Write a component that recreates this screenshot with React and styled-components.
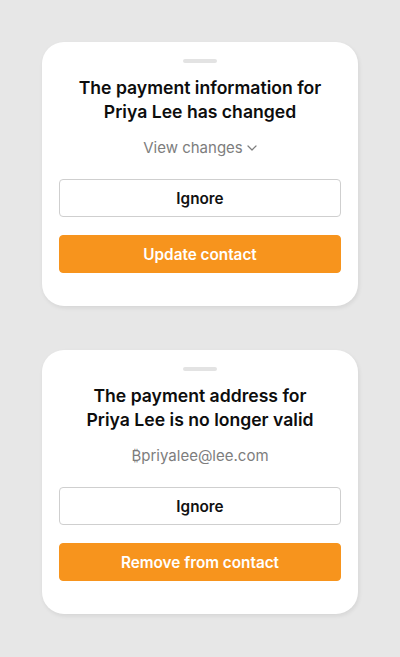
import React from 'react';
import styled, { createGlobalStyle } from 'styled-components';

const Global = createGlobalStyle`
  html, body {
    margin: 0;
    padding: 0;
    background: #e7e7e7;
    font-family: 'Inter', 'Noto Sans', sans-serif;
  }
  * { box-sizing: border-box; }
`;

const Page = styled.div`
  display: flex;
  flex-direction: column;
  gap: 44px;
  padding: 42px;
  min-height: 657px;
`;

const Card = styled.div`
  background: #fff;
  border-radius: 22px;
  padding: 17px 17px 33px;
  display: flex;
  flex-direction: column;
  align-items: center;
  box-shadow: 1px 2px 4px rgba(0, 0, 0, 0.08);
`;

const Handle = styled.div`
  width: 34px;
  height: 4px;
  border-radius: 2px;
  background: #e3e3e3;
`;

const Title = styled.h2`
  margin: 13px 0 0;
  font-size: 17.6px;
  line-height: 24px;
  font-weight: 600;
  color: #0d0d0d;
  text-align: center;
`;

const Sub = styled.div`
  margin-top: 14px;
  font-size: 15px;
  line-height: 20px;
  color: #7d7d7d;
  display: flex;
  align-items: center;
  gap: 4px;
`;

const Button = styled.button`
  width: 100%;
  height: 38px;
  border-radius: 4px;
  font-family: inherit;
  font-size: 15.3px;
  font-weight: 600;
  margin-top: ${(p) => (p.$primary ? '18px' : '21px')};
  border: 1px solid ${(p) => (p.$primary ? '#f7941d' : '#cfcfcf')};
  background: ${(p) => (p.$primary ? '#f7941d' : '#fff')};
  color: ${(p) => (p.$primary ? '#fff' : '#111')};
`;

const Chevron = () => (
  <svg width="10" height="6" viewBox="0 0 10 6" fill="none">
    <path d="M1 1l4 4 4-4" stroke="#7d7d7d" strokeWidth="1.2" strokeLinecap="round" strokeLinejoin="round" />
  </svg>
);

export default function App() {
  return (
    <>
      <Global />
      <Page>
        <Card>
          <Handle />
          <Title>
            The payment information for
            <br />
            Priya Lee has changed
          </Title>
          <Sub>
            View changes <Chevron />
          </Sub>
          <Button>Ignore</Button>
          <Button $primary>Update contact</Button>
        </Card>
        <Card>
          <Handle />
          <Title>
            The payment address for
            <br />
            Priya Lee is no longer valid
          </Title>
          <Sub>₿priyalee@lee.com</Sub>
          <Button>Ignore</Button>
          <Button $primary>Remove from contact</Button>
        </Card>
      </Page>
    </>
  );
}
